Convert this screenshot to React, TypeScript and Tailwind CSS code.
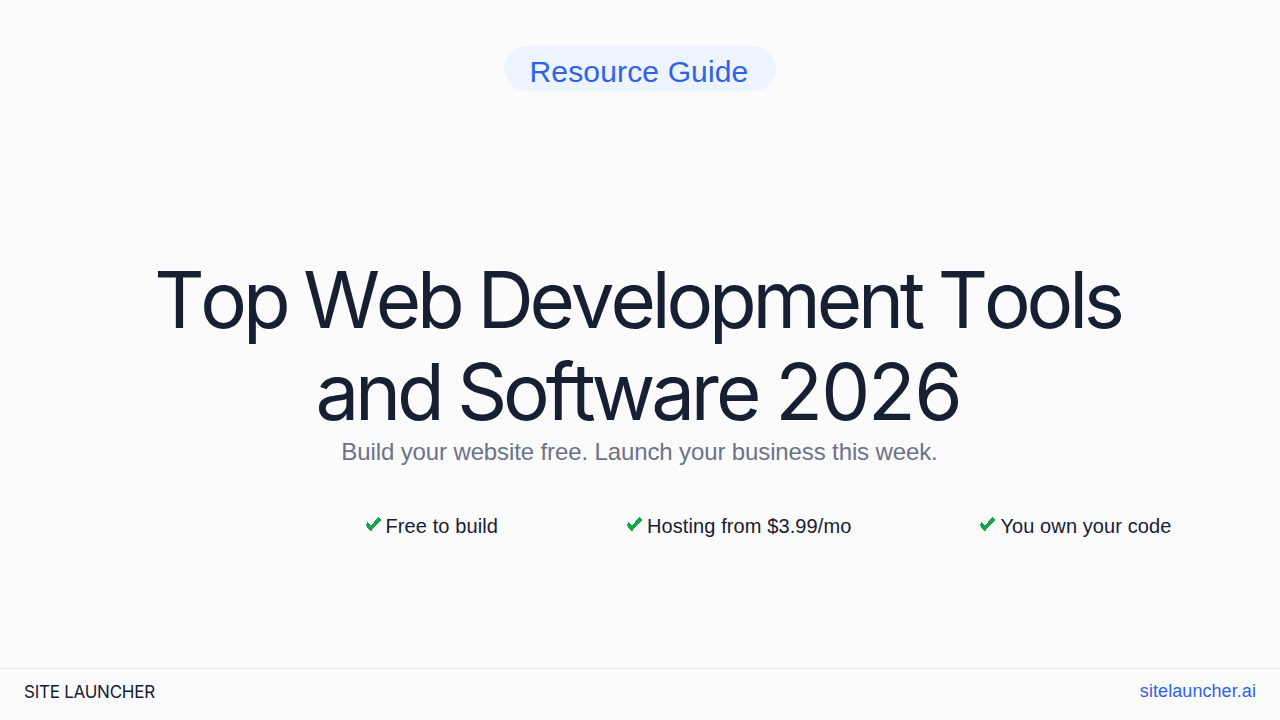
export default function App() {
  const items = ["Free to build", "Hosting from $3.99/mo", "You own your code"];
  return (
    <div className="w-[1280px] h-[720px] overflow-hidden bg-[#fbfbfc] flex flex-col font-['Liberation_Sans',sans-serif]">
      <main className="flex-1 flex flex-col items-center min-h-0">
        <div className="mt-[46px] h-[45px] w-[272px] rounded-full bg-[#edf3ff] flex items-start justify-center pt-[9px] pr-[2px] text-[30px] text-[#2f62ea] leading-[34px] tracking-[0.15px]">
          Resource Guide
        </div>
        <h1 className="mt-[163px] pr-[5px] text-center font-['Inter',sans-serif] font-normal text-[78px] leading-[92px] tracking-[-4.2px] tabular-nums [font-kerning:none] text-[#172033]">
          Top Web Development Tools
          <br />
          and Software 2026
        </h1>
        <p className="pr-[1px] text-[24px] leading-[28px] text-[#6b7388] tracking-[-0.12px]">Build your website free. Launch your business this week.</p>
        <div className="mt-[48px] flex gap-[128px] pl-[256px] justify-center text-[20px] leading-[24px] text-[#172033] tracking-[0.1px]">
          {items.map((t) => (
            <div key={t} className="flex items-center gap-[4px]">
              <svg width="17" height="16" viewBox="0 0 17 16" shapeRendering="crispEdges" className="-mt-[4px]">
                <path d="M0.3 9 L5.7 15.5 L16 4 L13.5 1 L5.7 9.7 L2.5 6.3 Z" fill="#16a34a" />
              </svg>
              <span>{t}</span>
            </div>
          ))}
        </div>
      </main>
      <footer className="h-[52px] border-t border-[#e5e7eb] flex items-center justify-between px-[24px] pb-[4px]">
        <span className="font-['Inter',sans-serif] text-[17px] tracking-[-0.25px] text-[#172033]">SITE LAUNCHER</span>
        <span className="text-[18px] text-[#2f62ea] pb-[3px] tracking-[0.07px]">sitelauncher.ai</span>
      </footer>
    </div>
  );
}
